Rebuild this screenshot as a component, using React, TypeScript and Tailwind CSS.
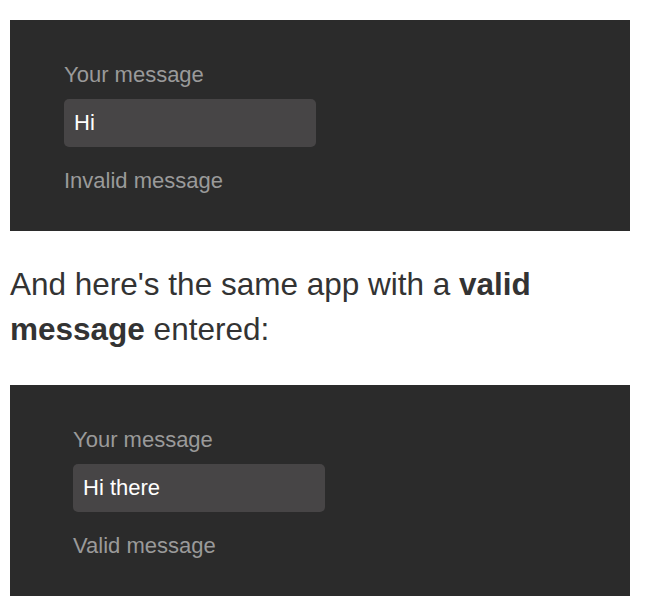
function MessageDemo({ value, status, indent }: { value: string; status: string; indent: string }) {
  return (
    <div className={`bg-[#2b2b2b] pt-[39px] pb-[34px] ${indent}`}>
      <div className="text-[22px] leading-[32px] text-[#9a9a9a]">Your message</div>
      <div className="mt-[8px] h-[48px] w-[252px] rounded-[5px] bg-[#474546] px-[10px] text-[22px] leading-[48px] text-white">
        {value}
      </div>
      <div className="mt-[18px] text-[22px] leading-[32px] text-[#9a9a9a]">{status}</div>
    </div>
  );
}

export default function App() {
  return (
    <div className="min-h-screen bg-white px-[10px] pt-[20px] pr-[22px] font-['Liberation_Sans',Arial,sans-serif]">
      <MessageDemo value="Hi" status="Invalid message" indent="pl-[54px]" />
      <p className="mt-[31px] text-[31.5px] leading-[45px] text-[#333333]">
        And here's the same app with a <strong className="font-bold">valid message</strong> entered:
      </p>
      <div className="mt-[33px]">
        <MessageDemo value="Hi there" status="Valid message" indent="pl-[63px]" />
      </div>
    </div>
  );
}
